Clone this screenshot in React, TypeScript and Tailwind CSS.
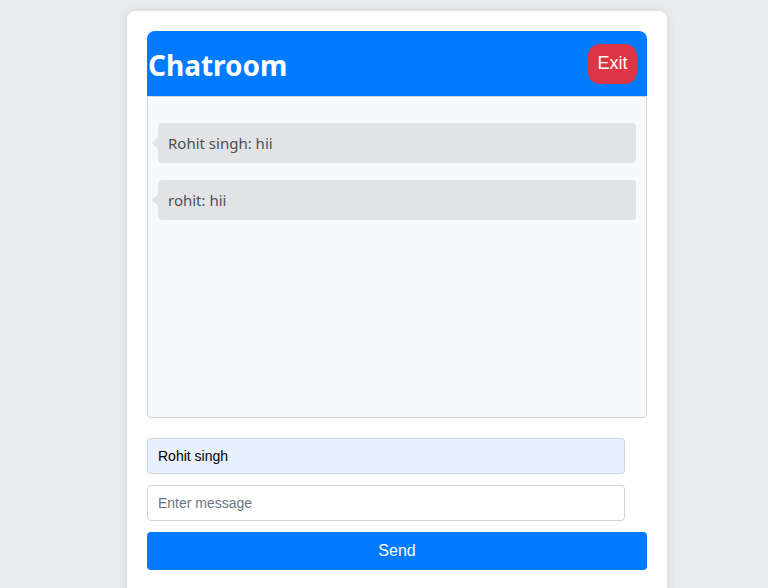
export default function App() {
  const messages = [
    { user: 'Rohit singh', text: 'hii' },
    { user: 'rohit', text: 'hii' },
  ]

  return (
    <div className="min-h-screen bg-[#e9ecef] pt-[11px]" style={{ fontFamily: '"Noto Sans", "Open Sans", sans-serif' }}>
      <div className="ml-[127px] w-[540px] h-[600px] rounded-lg bg-white p-5 shadow-[0_0_10px_rgba(0,0,0,0.1)]">
        <div className="flex h-[65px] items-center justify-between rounded-t-lg bg-[#007bff] pr-[10px]">
          <h1 className="pl-px pt-[3px] text-[28px] font-bold text-white leading-none">Chatroom</h1>
          <button
            type="button"
            className="h-[40px] w-[49px] rounded-xl bg-[#dc3545] text-[18px] text-white"
            style={{ fontFamily: '"Liberation Sans", Arial, sans-serif' }}
          >
            Exit
          </button>
        </div>

        <div className="h-[322px] rounded-b border border-[#ced4da] bg-[#f8f9fa] px-[10px] pt-[26px] flex flex-col gap-[17px]">
          {messages.map((m, i) => (
            <div key={i} className="relative flex h-[40px] items-center rounded bg-[#e2e3e5] px-[10px] pt-px text-[15px] text-[#495057]">
              <span className="absolute left-[-6px] top-[14px] h-0 w-0 border-y-[6px] border-r-[6px] border-y-transparent border-r-[#e2e3e5]" />
              {m.user}: {m.text}
            </div>
          ))}
        </div>

        <div className="mt-5 flex flex-col gap-[11px]" style={{ fontFamily: '"Liberation Sans", Arial, sans-serif' }}>
          <input
            type="text"
            defaultValue="Rohit singh"
            className="h-[36px] w-[478px] rounded border border-[#ced4da] bg-[#e8f0fe] px-[10px] text-[14px] text-black outline-none"
          />
          <input
            type="text"
            placeholder="Enter message"
            className="h-[36px] w-[478px] rounded border border-[#ced4da] bg-white px-[10px] text-[14px] text-black outline-none placeholder:text-[#6c757d]"
          />
          <button type="button" className="h-[38px] w-full rounded bg-[#007bff] text-[16px] text-white">
            Send
          </button>
        </div>
      </div>
    </div>
  )
}
